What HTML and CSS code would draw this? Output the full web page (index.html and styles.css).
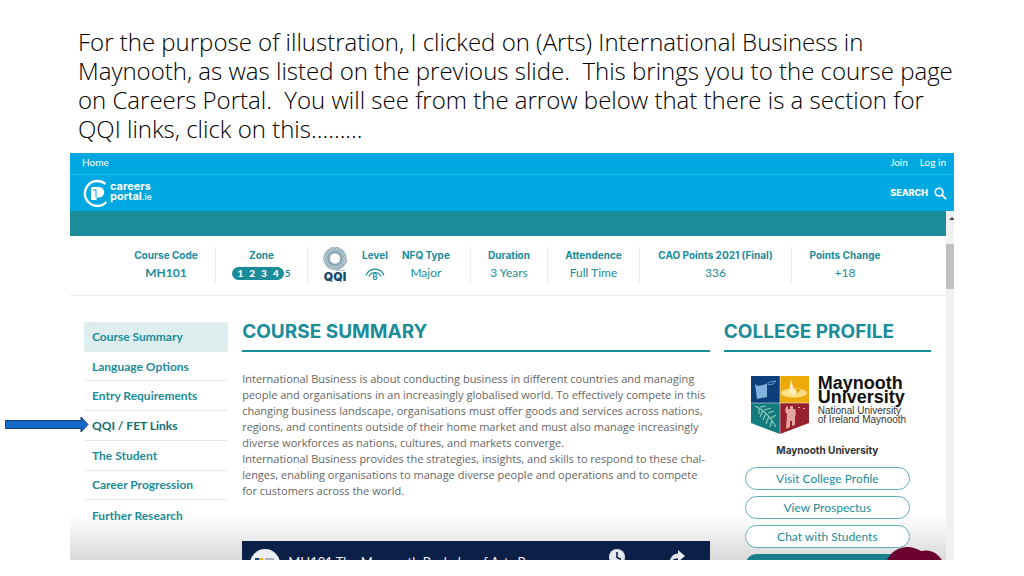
FILE: index.html
```html
<!DOCTYPE html>
<html lang="en">
<head>
<meta charset="utf-8">
<meta name="viewport" content="width=device-width, initial-scale=1">
<title>Careers Portal course page</title>
<link rel="stylesheet" href="styles.css">
</head>
<body class="slide">
<h1 class="slide-title">For the purpose of illustration, I clicked on (Arts) International Business in<br>Maynooth, as was listed on the previous slide.&nbsp; This brings you to the course page<br>on Careers Portal.&nbsp; You will see from the arrow below that there is a section for<br>QQI links, click on this………</h1>
<div class="portal">
  <header>
    <nav class="topbar" aria-label="Account">
      <a href="#">Home</a>
      <span class="account"><a href="#">Join</a><a href="#">Log in</a></span>
    </nav>
    <div class="brandbar">
      <a class="brand" href="#" aria-label="careersportal.ie">
        <svg class="brand-mark" viewBox="0 0 28 28" aria-hidden="true">
          <path d="M24.500 5A12.500 12.500 0 1 0 25.500 23" fill="none" stroke="#fff" stroke-width="2.300"/>
          <path d="M10 8h8a5 5 0 0 1 0 10.500h-2.500V21H10z" fill="#fff"/>
          <path d="M15 10.500v8M15 10.500l-3 1" fill="none" stroke="#00a8e1" stroke-width="1"/>
        </svg>
        <span class="brand-name">careers<br>portal<span class="brand-tld">.ie</span></span>
      </a>
      <button class="search" type="button">SEARCH
        <svg class="search-icon" viewBox="0 0 14 14" aria-hidden="true"><circle cx="5.500" cy="5.500" r="4.200" fill="none" stroke="#fff" stroke-width="1.700"/><path d="M8.600 8.600L13 13" stroke="#fff" stroke-width="2.100"/></svg>
      </button>
    </div>
  </header>
  <div class="viewport">
    <div class="page">
      <div class="band"></div>
      <section class="facts" aria-label="Course facts">
        <div class="fact"><b>Course Code</b><span class="strong">MH101</span></div>
        <div class="fact"><b>Zone</b><span class="zones"><span class="zones-on"><i>1</i><i>2</i><i>3</i><i>4</i></span><i>5</i></span></div>
        <div class="fact award">
          <div class="qqi">
            <svg class="qqi-mark" viewBox="0 0 26 24" aria-hidden="true">
              <circle cx="13" cy="11.500" r="8" fill="none" stroke="#d3dfe5" stroke-width="7"/>
              <g fill="none" stroke="#6f90a2" stroke-width=".5">
                <ellipse cx="13" cy="11.500" rx="11.500" ry="6"/><ellipse cx="13" cy="11.500" rx="11.500" ry="6" transform="rotate(22 13 11.500)"/><ellipse cx="13" cy="11.500" rx="11.500" ry="6" transform="rotate(45 13 11.500)"/><ellipse cx="13" cy="11.500" rx="11.500" ry="6" transform="rotate(67 13 11.500)"/><ellipse cx="13" cy="11.500" rx="11.500" ry="6" transform="rotate(90 13 11.500)"/><ellipse cx="13" cy="11.500" rx="11.500" ry="6" transform="rotate(112 13 11.500)"/><ellipse cx="13" cy="11.500" rx="11.500" ry="6" transform="rotate(135 13 11.500)"/><ellipse cx="13" cy="11.500" rx="11.500" ry="6" transform="rotate(157 13 11.500)"/>
                <path d="M15 22c5-1 9-4 10-9M14 23.500h9"/>
              </g>
              <circle cx="13" cy="11.500" r="3.800" fill="#fff"/>
            </svg>
            <strong class="qqi-name">QQI</strong>
          </div>
          <div class="pair"><b>Level</b>
            <span class="level"><svg class="level-arc" viewBox="0 0 20 14" aria-hidden="true"><path d="M1 9.500A9.500 9.500 0 0 1 19 9.500M4 10.500A6.500 6.500 0 0 1 16 10.500" fill="none" stroke="#1b8c9a" stroke-width="1.200"/></svg><span class="level-value">8</span></span>
          </div>
          <div class="pair"><b>NFQ Type</b><span>Major</span></div>
        </div>
        <div class="fact"><b>Duration</b><span>3 Years</span></div>
        <div class="fact"><b>Attendence</b><span>Full Time</span></div>
        <div class="fact"><b>CAO Points 2021 (Final)</b><span>336</span></div>
        <div class="fact"><b>Points Change</b><span>+18</span></div>
      </section>
      <div class="columns">
        <nav class="sections" aria-label="Course sections">
          <a class="current" href="#">Course Summary</a>
          <a href="#">Language Options</a>
          <a href="#">Entry Requirements</a>
          <a class="target" href="#">QQI / FET Links
            <svg class="arrow" viewBox="0 0 84 17" aria-hidden="true"><path d="M.5 4.500H76V1L83 8.500L76 16V12.500H.5z" fill="#1269c7" stroke="#173f78"/></svg>
          </a>
          <a href="#">The Student</a>
          <a href="#">Career Progression</a>
          <a href="#">Further Research</a>
        </nav>
        <main>
          <h2>COURSE SUMMARY</h2>
          <p class="summary">International Business is about conducting business in different countries and managing<br>people and organisations in an increasingly globalised world. To effectively compete in this<br>changing business landscape, organisations must offer goods and services across nations,<br>regions, and continents outside of their home market and must also manage increasingly<br>diverse workforces as nations, cultures, and markets converge.<br>International Business provides the strategies, insights, and skills to respond to these chal-<br>lenges, enabling organisations to manage diverse people and operations and to compete<br>for customers across the world.</p>
          <div class="video">
            <svg class="avatar" viewBox="0 0 30 30" aria-hidden="true"><circle cx="15" cy="15" r="15" fill="#eceff2"/><path d="M5 9h4v7H5z" fill="#17477f"/><path d="M9 9h4v7H9z" fill="#e9ac18"/><path d="M15 10h9M15 12h9" stroke="#777" stroke-width="1.200"/></svg>
            <span class="video-title">MH101 The Maynooth Bachelor of Arts B...</span>
            <svg class="video-icon" viewBox="0 0 16 16" aria-hidden="true"><circle cx="8" cy="8" r="8" fill="#e4e7ec"/><path d="M8 3v5.500l4 2" fill="none" stroke="#0e2144" stroke-width="1.600"/></svg>
            <svg class="video-icon" viewBox="0 0 16 16" aria-hidden="true"><path d="M9 1l7 6-7 6V9.500C5 9.500 2.500 11 0 15 1 8 4 5 9 4.500z" fill="#e4e7ec"/></svg>
          </div>
        </main>
        <aside>
          <h2>COLLEGE PROFILE</h2>
          <div class="college">
            <svg class="crest" viewBox="0 0 58 58" aria-hidden="true">
              <path d="M0 0h29v27H0z" fill="#0c3f7c"/><path d="M29 0h29v27H29z" fill="#eeaa0a"/>
              <path d="M0 27h29v31L0 47z" fill="#137a7d"/><path d="M29 27h29v20L29 58z" fill="#98212e"/>
              <path d="M4 8l3 2 9-2 0 13-10 2z" fill="#83b2df"/><path d="M15 9l4-3 6-1-3 3-5 1" fill="none" stroke="#83b2df" stroke-width=".8"/>
              <ellipse cx="43" cy="17" rx="13" ry="4.500" fill="#ffdf83"/><path d="M40 3l3 11 6-2-5 7-6-2z" fill="#fff1bd"/><path d="M45 13l5 0-4 5z" fill="#e8a106"/>
              <g fill="none" stroke="#91c8bd" stroke-width="1.200"><path d="M4 30C14 34 20 42 25 51M8 32l0 6M12 34l-3 7M15 37l-3 7M18 40l-3 8M21 44l-2 7M9 31l6-1M13 34l7-2M17 37l6-2M20 42l5-3"/></g>
              <path d="M35 31l2-1v3h2v-3h3v3h2v-2l1 8-1 1v9l-3 1v-5h-2v6l-4 2 1-15-2-3z" fill="#e5a5a1"/><path d="M47 31h2v1h-2zM52 32h2v1h-2z" fill="#e5a5a1"/>
              <path d="M29 0v58M0 27h58" stroke="#fff" stroke-width=".5"/>
            </svg>
            <div><strong class="college-title">Maynooth<br>University</strong><span class="college-sub">National University<br>of Ireland Maynooth</span></div>
          </div>
          <p class="college-name">Maynooth University</p>
          <div class="actions">
            <button type="button">Visit College Profile</button>
            <button type="button">View Prospectus</button>
            <button type="button">Chat with Students</button>
            <button class="filled" type="button" aria-label="More"></button>
          </div>
        </aside>
      </div>
      <svg class="chat" viewBox="0 0 56 13" aria-hidden="true"><path d="M0 13C6 1 20-4 34 4C44 2 50 6 55 13z" fill="#6b0030"/></svg>
    </div>
    <div class="scroll" aria-hidden="true"><svg class="scroll-up" viewBox="0 0 8 8"><path d="M3 6l3-3 2 2v1z" fill="#444"/></svg><div class="thumb"></div></div>
  </div>
</div>
</body>
</html>
```
FILE: styles.css
```css
* { box-sizing: border-box; }
.slide {
  margin: 0;
  padding: 27px 70px 16px;
  height: 100vh;
  display: flex;
  flex-direction: column;
  background: #fff;
  font-family: Lato, "Liberation Sans", sans-serif;
  color: #1b8c9a;
}
.slide-title {
  margin: 0 0 10px;
  padding-left: 8px;
  font-size: 24px;
  line-height: 29px;
  font-family: "Open Sans", sans-serif;
  font-weight: 300;
  color: #000;
  white-space: nowrap;
}
a { color: inherit; text-decoration: none; }
button { font: inherit; color: inherit; cursor: pointer; }
i { font-style: normal; }

.portal { flex: 1; min-height: 0; display: flex; flex-direction: column; }
header { background: #00a8e1; color: #fff; }
.topbar {
  display: flex;
  justify-content: space-between;
  padding: 0 8px 2px 12px;
  font-size: 10px;
  line-height: 19px;
  border-bottom: 1px solid #22bcf0;
}
.account { display: flex; gap: 12px; }
.brandbar {
  display: flex;
  justify-content: space-between;
  align-items: center;
  padding: 0 7px 0 11px;
  height: 36px;
}
.brand { display: flex; align-items: center; gap: 1px; }
.brand-mark { width: 28px; height: 28px; }
.brand-name { font: 700 11px/10px Inter, sans-serif; padding-bottom: 3px; }
.brand-tld { font-weight: 400; font-size: 9px; }
.search {
  display: flex;
  align-items: center;
  gap: 6px;
  padding: 0;
  border: 0;
  background: none;
  font: 800 9px/14px Inter, sans-serif;
}
.search-icon { width: 13px; height: 13px; }

.viewport { flex: 1; min-height: 0; display: flex; }
.page {
  position: relative;
  flex: 1;
  min-width: 0;
  display: flex;
  flex-direction: column;
  background: linear-gradient(to top, #d9d9d9, #fff 44px);
}
.band { height: 25px; flex: none; background: #1b8c9a; }
.facts {
  display: grid;
  grid-template-columns: 98fr 92fr 163fr 77fr 92fr 152fr 107fr;
  padding: 11px 48px 12px 47px;
  border-bottom: 1px solid #ececec;
  font-size: 12px;
  line-height: 18px;
  text-align: center;
  white-space: nowrap;
}
.fact { display: flex; flex-direction: column; align-items: center; height: 36px; }
.fact + .fact { border-left: 1px solid #ececec; }
.facts b { font: 700 10px/16px Inter, sans-serif; }
.fact > span, .pair > span { margin-top: 1px; }
.strong { font-weight: 700; }
.zones { display: flex; align-items: center; font-weight: 700; font-size: 10px; }
.zones-on {
  display: flex;
  gap: 6px;
  padding: 0 5px;
  margin-right: 1px;
  border-radius: 7px;
  background: #1b8c9a;
  color: #fff;
  line-height: 13px;
  font-weight: 900;
}
.award { flex-direction: row; align-items: flex-start; padding-left: 14px; gap: 14px; }
.qqi { display: flex; flex-direction: column; align-items: center; width: 26px; }
.qqi-mark { width: 26px; height: 24px; flex: none; }
.qqi-name { font: 900 12px/12px Inter, sans-serif; color: #184a6c; }
.pair { display: flex; flex-direction: column; align-items: center; }
.level { display: grid; justify-items: center; }
.level > * { grid-area: 1 / 1; }
.level-arc { width: 20px; height: 14px; margin-top: 2px; }
.level-value { font-size: 9px; font-weight: 700; padding-top: 6px; line-height: 14px; }

.columns {
  flex: 1;
  min-height: 0;
  display: grid;
  grid-template-columns: 144fr 467fr 207fr;
  gap: 14px;
  padding: 26px 15px 0 14px;
}
.sections {
  display: grid;
  grid-auto-rows: 1fr;
  align-self: start;
  min-height: 208px;
  font-size: 12px;
  font-weight: 700;
}
.sections a {
  position: relative;
  display: flex;
  align-items: center;
  padding-left: 8px;
  border-bottom: 1px solid #eaeaea;
}
.sections a:last-child { border-bottom: 0; }
.sections .current { background: #deeeef; }
.sections .target { color: #126f73; }
.arrow { position: absolute; right: 100%; top: 5px; width: 84px; height: 17px; margin-right: -5px; }

main, aside { min-width: 0; min-height: 0; display: flex; flex-direction: column; }
main { overflow: hidden; }
h2 {
  margin: 0;
  padding-bottom: 8px;
  border-bottom: 2px solid #1b8c9a;
  font: 700 19px/20px Inter, sans-serif;
  white-space: nowrap;
}
.summary {
  margin: 19px 0 42px;
  font: 11px/16px "Open Sans", sans-serif;
  color: #666;
  white-space: nowrap;
}
.video {
  display: flex;
  align-items: flex-start;
  gap: 8px;
  height: 60px;
  flex: none;
  padding: 8px 25px 0 8px;
  background: #0b2046;
  color: #eee;
}
.avatar { width: 30px; height: 30px; flex: none; }
.video-title {
  flex: 1;
  margin-top: 5px;
  white-space: nowrap;
  font-size: 13px;
  line-height: 16px;
}
.video-icon { width: 16px; height: 16px; flex: none; margin-left: 36px; }

.college { display: flex; gap: 9px; margin: 24px 0 0 27px; color: #111; white-space: nowrap; }
.crest { width: 58px; height: 58px; flex: none; }
.college-title { display: block; font: 700 18px/14px "Liberation Sans", sans-serif; }
.college-sub { display: block; margin-top: 2px; font: 10px/9px "Liberation Sans", sans-serif; color: #333; }
.college-name { margin: 8px 0 9px; text-align: center; font: 700 10px/16px Inter, sans-serif; color: #333; }
.actions { display: flex; flex-direction: column; gap: 6px; padding: 0 21px; overflow: hidden; }
.actions button {
  flex: none;
  height: 23px;
  border: 1px solid #5fb0b5;
  border-radius: 12px;
  background: #fff;
  font-size: 12px;
  line-height: 20px;
  padding: 0;
}
.actions .filled { background: #17808c; border-color: #17808c; }
.chat { position: absolute; right: 3px; bottom: 0; width: 56px; height: 13px; }

.scroll { width: 8px; flex: none; background: #f1f1f1; }
.scroll-up { display: block; width: 8px; height: 8px; margin: 3px 0 22px; }
.thumb { height: 45px; background: #c1c1c1; }
```
